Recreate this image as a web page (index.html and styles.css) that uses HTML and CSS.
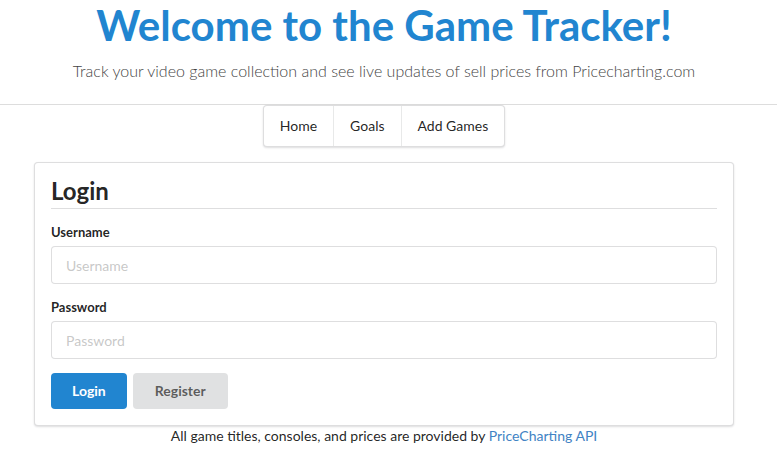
FILE: index.html
```html
<!DOCTYPE html>
<html>
<head>
<meta charset="utf-8">
<link rel="stylesheet" href="styles.css">
</head>
<body>
<header class="masthead">
  <h1 class="title">Welcome to the Game Tracker!</h1>
  <p class="subtitle">Track your video game collection and see live updates of sell prices from Pricecharting.com</p>
</header>
<main class="page">
  <nav class="menu">
    <a class="menu-item">Home</a>
    <a class="menu-item">Goals</a>
    <a class="menu-item">Add Games</a>
  </nav>
  <section class="segment">
    <h2 class="segment-header">Login</h2>
    <form class="form">
      <div class="field">
        <label class="field-label">Username</label>
        <input class="field-input" type="text" placeholder="Username">
      </div>
      <div class="field">
        <label class="field-label">Password</label>
        <input class="field-input" type="password" placeholder="Password">
      </div>
      <div class="actions">
        <button type="button" class="btn btn-primary">Login</button>
        <button type="button" class="btn btn-secondary">Register</button>
      </div>
    </form>
  </section>
  <p class="footer">All game titles, consoles, and prices are provided by <a class="footer-link">PriceCharting API</a></p>
</main>
</body>
</html>
```

FILE: styles.css
```css
* { box-sizing: border-box; }
html, body { margin: 0; padding: 0; background: #fff; }
body {
  font-family: Lato, "Helvetica Neue", Arial, sans-serif;
  font-size: 14px;
  line-height: 1.4285em;
  color: rgba(0,0,0,.87);
}
.masthead {
  padding: 0 9px 0 0;
  border-bottom: 1px solid #ddd;
  text-align: center;
  height: 105px;
}
.title {
  margin: 0;
  padding-top: 0;
  font-size: 42px;
  line-height: 50px;
  font-weight: 700;
  color: #2185d0;
}
.subtitle {
  margin: 11px 0 0;
  font-size: 16px;
  line-height: 20px;
  font-weight: 300;
  color: #444;
}
.page {
  padding-right: 9px;
  display: flex;
  flex-direction: column;
  align-items: center;
}
.menu {
  display: flex;
  border: 1px solid rgba(34,36,38,.15);
  border-radius: 4px;
  box-shadow: 0 1px 2px 0 rgba(34,36,38,.15);
  background: #fff;
  margin-top: 0;
}
.menu-item {
  padding: 11px 16px;
  line-height: 18px;
  font-size: 14px;
  color: rgba(0,0,0,.87);
  border-left: 1px solid rgba(34,36,38,.1);
}
.menu-item:first-child { border-left: none; }
.segment {
  width: 700px;
  margin-top: 15px;
  padding: 14px 16px 16px;
  border: 1px solid rgba(34,36,38,.15);
  border-radius: 4px;
  box-shadow: 0 1px 2px 0 rgba(34,36,38,.15);
  background: #fff;
}
.segment-header {
  margin: 0 0 14px;
  font-size: 24px;
  line-height: 28px;
  font-weight: 700;
  color: rgba(0,0,0,.87);
  padding-bottom: 3px;
  border-bottom: 1px solid rgba(34,36,38,.15);
}
.form { display: flex; flex-direction: column; }
.field { display: flex; flex-direction: column; margin-bottom: 14px; }
.field-label {
  font-size: 13px;
  font-weight: 700;
  line-height: 18px;
  margin-bottom: 5px;
  color: rgba(0,0,0,.87);
}
.field-input {
  font-family: inherit;
  font-size: 14px;
  line-height: 17px;
  height: 38px;
  padding: 9.5px 14px;
  border: 1px solid rgba(34,36,38,.15);
  border-radius: 4px;
  color: rgba(0,0,0,.87);
  outline: none;
}
.field-input::placeholder { color: rgba(191,191,191,.87); }
.actions { display: flex; gap: 6px; }
.btn {
  font-family: inherit;
  font-size: 14px;
  font-weight: 700;
  line-height: 14px;
  height: 36px;
  padding: 11px 21px;
  border: none;
  border-radius: 4px;
  cursor: pointer;
}
.btn-primary { background: #2185d0; color: #fff; }
.btn-secondary { background: #e0e1e2; color: rgba(0,0,0,.6); padding: 11px 22px; }
.footer {
  margin: 0;
  font-size: 14px;
  line-height: 20px;
  color: rgba(0,0,0,.87);
}
.footer-link { color: #4183c4; }
```
